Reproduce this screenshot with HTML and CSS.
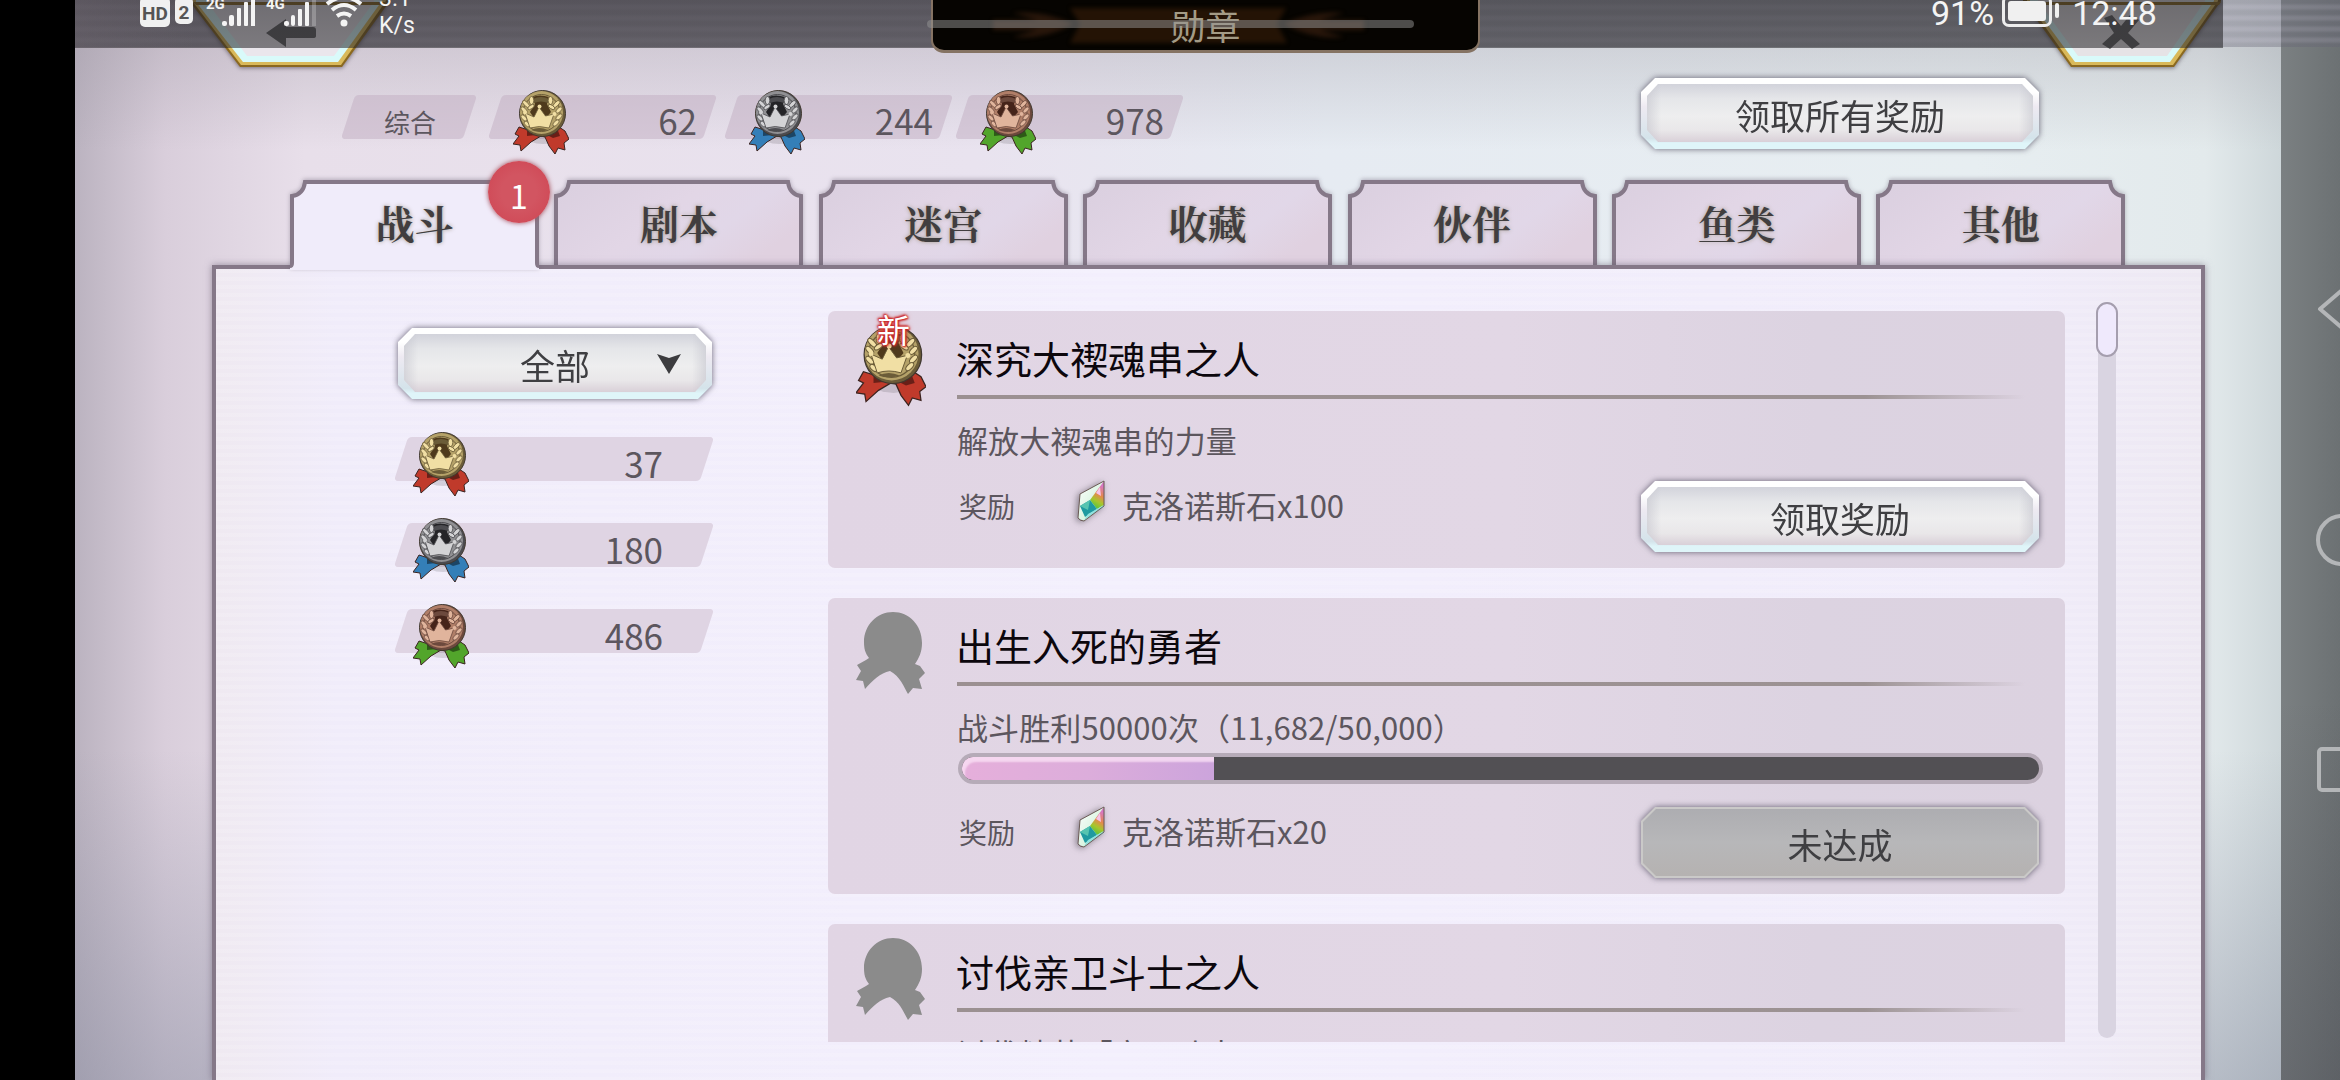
FILE: index.html
```html
<!DOCTYPE html>
<html lang="zh-CN">
<head>
    <meta charset="UTF-8">
    <meta name="viewport" content="width=device-width, initial-scale=1.0">
    <title>勋章</title>
    <link rel="stylesheet" href="styles.css">
</head>
<body>
    <svg class="defs" width="0" height="0">
        <defs>
            <linearGradient id="tabFill" x1="0" y1="0" x2="1" y2="0.5">
                <stop offset="0" stop-color="#dacfdf"/>
                <stop offset="0.5" stop-color="#e2d6e6"/>
                <stop offset="0.75" stop-color="#e1d7e8"/>
                <stop offset="1" stop-color="#e0d1e0"/>
            </linearGradient>
            <linearGradient id="btnGold" x1="0" y1="0" x2="0" y2="1">
                <stop offset="0" stop-color="#6c5016"/>
                <stop offset="0.7" stop-color="#8d6a1e"/>
                <stop offset="1" stop-color="#8a6820"/>
            </linearGradient>
            <linearGradient id="gemTop" x1="0" y1="0" x2="1" y2="1">
                <stop offset="0" stop-color="#fff"/>
                <stop offset="1" stop-color="#bfeccb"/>
            </linearGradient>
            <linearGradient id="gemSide" x1="0.3" y1="0" x2="0" y2="1">
                <stop offset="0" stop-color="#d877c4"/>
                <stop offset="0.35" stop-color="#e5884d"/>
                <stop offset="0.6" stop-color="#a8c62c"/>
                <stop offset="1" stop-color="#2ec448"/>
            </linearGradient>
        </defs>
        <symbol id="tab" viewBox="0 0 249 90">
            <path d="M2 91V16C10 15 14 10 15 2H234C235 10 239 15 247 16V91" stroke="#857888" stroke-width="4"/>
        </symbol>
        <symbol id="tabOpen" viewBox="0 0 249 90">
            <path d="M0 91V86Q2 86 2 83V16C10 15 14 10 15 2H234C235 10 239 15 247 16V83Q247 86 249 86V91Z"/>
            <path d="M0 86Q2 86 2 83V16C10 15 14 10 15 2H234C235 10 239 15 247 16V83Q247 86 249 86" fill="none" stroke="#857888" stroke-width="4"/>
        </symbol>
        <symbol id="medal" viewBox="0 0 56 65">
            <ellipse cx="30" cy="46" rx="17" ry="8" fill="#000" opacity="0.12"/>
            <path d="M6 37L2 44L6 46L0 54L7 55L8 61L18 52L28 46L32 47L36 56L42 64L45 58L52 60L51 53L56 49L52 41L46 37L28 44Z" fill="var(--ribbon)" stroke="#3b2420" stroke-width="1"/>
            <path d="M14 38L24 45L14 46ZM34 45L44 38L47 46L40 48Z" fill="#000" opacity="0.45"/>
            <circle cx="29.5" cy="23.5" r="23" fill="var(--dark)" stroke="#40382f" stroke-width="1"/>
            <circle cx="28.5" cy="22.5" r="21.5" fill="var(--mid)"/>
            <circle cx="28.5" cy="23" r="18.5" fill="none" stroke="var(--dark)" stroke-width="1"/>
            <path d="M19 7Q27 4 36 7L34 14L38 22L33 28H21L17 22L22 14Z" fill="var(--deep)"/>
            <path d="M20 9Q28 5 36 9L35 13Q28 10 21 13Z" fill="var(--dark)"/>
            <g fill="var(--light)" stroke="var(--dark)" stroke-width="0.8">
                <ellipse cx="18.500" cy="10.500" rx="2.300" ry="4"/>
                <ellipse cx="37.500" cy="10.500" rx="2.300" ry="4"/>
                <ellipse cx="13" cy="14" rx="2" ry="4.500" transform="rotate(-45 13 14)"/>
                <ellipse cx="43.500" cy="14" rx="2" ry="4.500" transform="rotate(45 43.500 14)"/>
                <ellipse cx="18" cy="17" rx="1.800" ry="3.800" transform="rotate(55 18 17)"/>
                <ellipse cx="38.500" cy="17" rx="1.800" ry="3.800" transform="rotate(-55 38.500 17)"/>
                <ellipse cx="11" cy="20" rx="2" ry="4" transform="rotate(-45 11 20)"/>
                <ellipse cx="46" cy="20" rx="2" ry="4" transform="rotate(45 46 20)"/>
                <ellipse cx="11" cy="28" rx="2" ry="4" transform="rotate(-45 11 28)"/>
                <ellipse cx="46" cy="27" rx="2" ry="4" transform="rotate(45 46 27)"/>
                <ellipse cx="43" cy="33" rx="2" ry="4" transform="rotate(45 43 33)"/>
                <ellipse cx="14" cy="34" rx="2" ry="3.500" transform="rotate(-45 14 34)"/>
            </g>
            <path d="M12 23L21 27L26 17L32.500 26L41 24L36 38Q26 35 17 38Z" fill="var(--light)" stroke="var(--dark)" stroke-width="0.800"/>
            <circle cx="26.500" cy="16.500" r="2" fill="var(--light)"/>
            <circle cx="12" cy="22.500" r="2" fill="var(--light)"/>
            <circle cx="41.500" cy="24" r="2" fill="var(--light)"/>
            <path d="M18 40Q26 36 35 40Q26 43 18 40Z" fill="var(--dark)"/>
        </symbol>
        <symbol id="silhouette" viewBox="0 0 70 82">
            <path d="M37 0C53 0 66 13 66 31C66 40 63 46 59 52L64 54L69 61L63 67L66 77L57 76L52 82C48 75 44 64 34 59C24 61 17 68 9 77L7 69L0 68L5 59L1 53L10 48L13 46C9 41 8 36 8 30C8 13 21 0 37 0Z" fill="#8b8b8b"/>
        </symbol>
        <symbol id="gem" viewBox="0 0 30 42">
            <path d="M28 1L4 14L2 38L8 41L28 26Z" fill="url(#gemTop)"/>
            <path d="M28 1L14 20L21 29L28 25Z" fill="url(#gemSide)"/>
            <path d="M24 7L20 13L25 16Z" fill="#f5c3e8"/>
            <path d="M4 26L14 20L21 29L9 37Z" fill="#1f9aa0"/>
            <path d="M4 26L14 20L12 30Z" fill="#56c4b0"/>
            <path d="M8 40L12 34L28 25V27Z" fill="#8fe2df"/>
            <path d="M28 1L4 14L2 38Q4 41 8 41L28 26Z" fill="none" stroke="#6b5a55" stroke-width="1"/>
        </symbol>
    </svg>

    <div class="screen">
        <div class="cutout"></div>
        <div class="game">
            <div class="summary">
                <div class="chip chip_label"><span>综合</span></div>
                <div class="chip gold"><svg class="medal"><use href="#medal"/></svg><span>62</span></div>
                <div class="chip silver"><svg class="medal"><use href="#medal"/></svg><span>244</span></div>
                <div class="chip bronze"><svg class="medal"><use href="#medal"/></svg><span>978</span></div>
                <div class="button claim_all"><span>领取所有奖励</span></div>
            </div>

            <div class="tabs">
                <div class="tab active"><svg><use href="#tabOpen"/></svg><span>战斗</span><div class="badge">1</div></div>
                <div class="tab"><svg><use href="#tab"/></svg><span>剧本</span></div>
                <div class="tab"><svg><use href="#tab"/></svg><span>迷宫</span></div>
                <div class="tab"><svg><use href="#tab"/></svg><span>收藏</span></div>
                <div class="tab"><svg><use href="#tab"/></svg><span>伙伴</span></div>
                <div class="tab"><svg><use href="#tab"/></svg><span>鱼类</span></div>
                <div class="tab"><svg><use href="#tab"/></svg><span>其他</span></div>
            </div>

            <div class="panel">
                <div class="side">
                    <div class="button filter">
                        <span>全部</span>
                        <svg class="arrow" viewBox="0 0 24 20"><path d="M0 0L12 4L24 0L12 20Z" fill="#3c3c3f"/></svg>
                    </div>
                    <div class="count gold"><svg class="medal"><use href="#medal"/></svg><span>37</span></div>
                    <div class="count silver"><svg class="medal"><use href="#medal"/></svg><span>180</span></div>
                    <div class="count bronze"><svg class="medal"><use href="#medal"/></svg><span>486</span></div>
                </div>

                <div class="list">
                    <div class="card card_new">
                        <div class="emblem gold"><svg><use href="#medal"/></svg><div class="new">新</div></div>
                        <div class="info">
                            <div class="title">深究大禊魂串之人</div>
                            <div class="rule"></div>
                            <div class="desc">解放大禊魂串的力量</div>
                            <div class="reward">
                                <span class="reward_label">奖励</span>
                                <svg class="gem"><use href="#gem"/></svg>
                                <span class="reward_item">克洛诺斯石x100</span>
                                <div class="button"><span>领取奖励</span></div>
                            </div>
                        </div>
                    </div>
                    <div class="card card_progress">
                        <div class="emblem"><svg><use href="#silhouette"/></svg></div>
                        <div class="info">
                            <div class="title">出生入死的勇者</div>
                            <div class="rule"></div>
                            <div class="desc">战斗胜利50000次（11,682/50,000）</div>
                            <div class="progress"><div class="bar" style="width: 23.36%"></div></div>
                            <div class="reward">
                                <span class="reward_label">奖励</span>
                                <svg class="gem"><use href="#gem"/></svg>
                                <span class="reward_item">克洛诺斯石x20</span>
                                <div class="button disabled"><span>未达成</span></div>
                            </div>
                        </div>
                    </div>
                    <div class="card card_progress">
                        <div class="emblem"><svg><use href="#silhouette"/></svg></div>
                        <div class="info">
                            <div class="title">讨伐亲卫斗士之人</div>
                            <div class="rule"></div>
                            <div class="desc">讨伐精英「亲卫斗士」</div>
                        </div>
                    </div>
                </div>

                <div class="scroll"><div class="thumb"></div></div>
            </div>
        </div>

        <div class="nav">
            <svg viewBox="0 0 59 1080" fill="none" stroke="#b4b6b8" stroke-width="4" stroke-linejoin="round">
                <path d="M66 286L39 309L66 332Z"/>
                <circle cx="61" cy="540" r="24"/>
                <rect x="38" y="749" width="44" height="41" rx="3"/>
            </svg>
        </div>
    </div>

    <!-- top overlays -->
    <div class="topband"></div>
    <svg class="corner corner_back" viewBox="0 0 206 70">
        <path d="M3 -10L3 2L53 67H155L205 -2V-10Z" fill="url(#btnGold)"/>
        <path d="M6 -10V2L54 65H154L201 -2V-10Z" fill="#d9b95a"/>
        <path d="M9 -10V2L56 62H151L197 -2V-10Z" fill="#d9fafa"/>
        <path d="M20 -10V2L60 56H147L187 2V-10Z" fill="#eae6ec"/>
        <path d="M3 -10V-2H205V-10ZM6 2H203L201 5H9Z" fill="#8d6a1e"/>
        <path d="M79 33L99 19V27H126Q129 27 129 30V36Q129 38 126 38H99V47Z" fill="#606062"/>
    </svg>
    <svg class="corner corner_close" viewBox="0 0 206 70">
        <path d="M5 -10V1L53 67H156L203 1V-10Z" fill="url(#btnGold)"/>
        <path d="M9 -10V1L54 65H155L200 1V-10Z" fill="#d9b95a"/>
        <path d="M12 -10V1L57 62H152L196 1V-10Z" fill="#d9fafa"/>
        <path d="M20 -10V1L60 56H149L187 1V-10Z" fill="#e6e3e6"/>
        <path d="M5 2H203L201 5H8Z" fill="#8d6a1e"/>
        <path d="M86 18L94 15L103 26L112 15L121 20L110 33L122 44L114 49L103 39L92 49L84 44L96 33Z" fill="#606062"/>
    </svg>
    <div class="statusbar">
        <span class="hd">HD</span>
        <span class="sim">2</span>
        <svg class="signals" viewBox="200 0 165 30" fill="#f4f4f4">
            <g font-family="Roboto, sans-serif" font-size="15" font-weight="700"><text x="206" y="9">2G</text><text x="266" y="9">4G</text></g>
            <rect x="222" y="21" width="5" height="5" rx="2"/><rect x="229" y="15" width="5" height="11" rx="2"/><rect x="237" y="8" width="4" height="18" rx="1"/><rect x="244" y="2" width="4" height="24" rx="1"/><rect x="251" y="-5" width="4" height="31"/>
            <rect x="284" y="21" width="5" height="5" rx="2"/><rect x="291" y="15" width="4" height="11" rx="2"/><rect x="298" y="9" width="4" height="17" rx="1"/><rect x="305" y="2" width="4" height="24" rx="1"/><rect x="312" y="-5" width="4" height="31" opacity="0.25"/>
            <circle cx="344" cy="23" r="3.500"/>
            <g fill="none" stroke="#f4f4f4" stroke-width="4"><path d="M337 16Q344 11 351 16"/><path d="M332 10Q344 0 356 10"/><path d="M327 4Q344 -10 361 4"/></g>
        </svg>
        <div class="speed"><div>3.1</div><div>K/s</div></div>
        <span class="percent">91%</span>
        <div class="battery"><div></div></div>
        <span class="clock">12:48</span>
    </div>
    <div class="heading">
        <svg viewBox="0 0 547 51">
            <path d="M137 8H353L344 24L354 43H137L147 24Z" fill="#241305"/>
            <path d="M80 13Q112 10 140 24Q112 40 80 37L104 30H60L60 20H104Z" fill="#28160a"/>
            <path d="M411 13Q379 10 351 24Q379 40 411 37L387 30H431V20H387Z" fill="#28160a"/>
        </svg>
        <span>勋章</span>
    </div>
    <div class="handle"></div>
</body>
</html>
```

FILE: styles.css
```css
body
{
    margin: 0;
    width: 2340px;
    height: 1080px;
    position: relative;
    overflow: hidden;
    background-color: #000;
    font-family: "Noto Sans CJK SC", "Noto Sans", sans-serif;
    color: #5c565e;
}
svg
{
    display: block;
}
.defs
{
    position: absolute;
}
.screen
{
    display: flex;
    height: 1080px;
}
.cutout
{
    width: 75px;
    background-color: #000;
}
.game
{
    width: 2206px;
    display: flex;
    flex-direction: column;
    background:
        linear-gradient(to bottom, rgba(150, 145, 155, 0.3) 40px, transparent 150px),
        linear-gradient(to bottom, transparent 750px, rgba(130, 135, 155, 0.45) 1080px),
        linear-gradient(to right, #bbb3c0 0, #d9cedb 90px, #e8dfea 230px, #e9e3ef 900px, #e6ebf2 1250px, #e7eef1 1900px, #e3eaec 2130px, #ced7da 2206px);
}

/* medals */
.gold
{
    --light: #f1dfa4;
    --mid: #b5a269;
    --dark: #6b5c38;
    --deep: #4f3a1c;
    --ribbon: #c03a2b;
}
.silver
{
    --light: #d3d3d5;
    --mid: #909093;
    --dark: #4c4c50;
    --deep: #242427;
    --ribbon: #347fb8;
}
.bronze
{
    --light: #e0b49c;
    --mid: #b07e68;
    --dark: #6c493d;
    --deep: #45241a;
    --ribbon: #52a52b;
}
.medal
{
    width: 56px;
    height: 65px;
}

/* bevelled buttons */
.button
{
    width: 398px;
    height: 71px;
    position: relative;
    filter: drop-shadow(0 0 3px rgba(70, 65, 85, 0.8));
    flex-shrink: 0;
    font-size: 35px;
    line-height: 73px;
    text-align: center;
    color: #3f3f42;
}
.button::before,
.button::after
{
    content: "";
    position: absolute;
    inset: 0;
    background: linear-gradient(to bottom, #fff 0, #fff 20%, #eeeaf2 40%, #d4e3ea 85%, #dff5f9 92%);
    clip-path: polygon(14px 0, calc(100% - 14px) 0, 100% 14px, 100% calc(100% - 14px), calc(100% - 14px) 100%, 14px 100%, 0 calc(100% - 14px), 0 14px);
}
.button::after
{
    inset: 6px 6px 7px;
    background:
        linear-gradient(to right, rgba(190, 190, 200, 0.5), transparent 14px, transparent calc(100% - 14px), rgba(190, 190, 200, 0.5)),
        linear-gradient(to bottom, #d2d3db 0, #e5e6e9 25%, #eeeeef 55%, #e9e7e9 80%, #d9d0d8 100%);
    clip-path: polygon(11px 0, calc(100% - 11px) 0, 100% 12px, 100% calc(100% - 12px), calc(100% - 11px) 100%, 11px 100%, 0 calc(100% - 12px), 0 12px);
}
.button span
{
    position: relative;
    z-index: 1;
}
.button.disabled::before
{
    background: #cac9c8;
}
.button.disabled::after
{
    inset: 2px;
    background: linear-gradient(to bottom, #adadb1 0, #b7b7b9 50%, #b5b2b1 100%);
    clip-path: polygon(13px 0, calc(100% - 13px) 0, 100% 13px, 100% calc(100% - 13px), calc(100% - 13px) 100%, 13px 100%, 0 calc(100% - 13px), 0 13px);
}

/* totals */
.summary
{
    height: 71px;
    margin-top: 78px;
    padding-left: 266px;
    display: flex;
}
.chip
{
    width: 229px;
    height: 44px;
    margin-top: 17px;
    margin-right: 7px;
    box-sizing: border-box;
    display: flex;
    justify-content: space-between;
    position: relative;
    font-size: 35px;
    line-height: 49px;
    padding: 0 20px 0 25px;
}
.chip::before,
.count::before
{
    content: "";
    position: absolute;
    inset: 0 7px;
    border-radius: 4px;
    background-color: rgba(193, 174, 193, 0.5);
    transform: skewX(-18deg);
}
.chip span,
.chip svg,
.count span,
.count svg
{
    position: relative;
}
.chip svg
{
    margin-top: -5px;
}
.chip_label
{
    width: 136px;
    font-size: 26px;
    line-height: 53px;
    justify-content: center;
    margin-right: 11px;
    padding: 0 0 0 2px;
}
.chip.silver
{
    margin-right: 2px;
}
.chip.bronze
{
    margin-right: 0;
}
.claim_all
{
    margin-left: 457px;
}

/* tabs */
.tabs
{
    height: 85px;
    margin-top: 31px;
    padding-left: 215px;
    display: flex;
    gap: 15.4px;
}
.tab
{
    width: 249px;
    height: 85px;
    position: relative;
    font-family: "Noto Serif CJK SC", "Source Han Serif SC", "Noto Sans CJK SC", serif;
    font-size: 39px;
    font-weight: 700;
    line-height: 84px;
    text-align: center;
    color: #413e3f;
    text-shadow: 0 0 4px #a59d90;
}
.tab svg
{
    position: absolute;
    left: 0;
    top: 0;
    width: 249px;
    height: 90px;
    fill: url(#tabFill);
    filter: drop-shadow(0 -1px 2px rgba(100, 90, 110, 0.4));
}
.tab span
{
    position: relative;
}
.tab.active
{
    z-index: 2;
}
.tab.active svg
{
    fill: #f0ecfa;
}
.badge
{
    width: 62px;
    height: 62px;
    border-radius: 50%;
    background: radial-gradient(circle, #d25561 40%, #d04b58 75%, #b04450 100%);
    box-shadow: 0 0 5px #a04c58;
    position: absolute;
    left: 198px;
    top: -19px;
    font-family: "Noto Sans CJK SC", sans-serif;
    font-size: 32px;
    font-weight: 400;
    line-height: 68px;
    color: #fff;
    text-shadow: none;
}

/* panel */
.panel
{
    width: 1985px;
    margin-left: 137px;
    border: 4px solid #857888;
    border-bottom: none;
    flex: 1;
    display: flex;
    position: relative;
    z-index: 1;
    background:
        repeating-linear-gradient(to bottom, rgba(255, 255, 255, 0.12) 0, rgba(255, 255, 255, 0.12) 4px, transparent 4px, transparent 8px),
        linear-gradient(to right, #efe9f1 0, #f0ecfa 120px, #f3effd 900px, #f0ecfa 1800px, #ede8f2 1985px);
    box-shadow: 0 0 7px rgba(100, 90, 110, 0.6);
}
.side
{
    width: 314px;
    padding: 59px 0 0 182px;
}
.filter
{
    width: 314px;
}
.arrow
{
    width: 24px;
    height: 20px;
    position: absolute;
    right: 31px;
    top: 26px;
    z-index: 1;
}
.count
{
    width: 320px;
    height: 44px;
    margin: 0 0 42px -4px;
    padding: 0 51px 0 19px;
    box-sizing: border-box;
    position: relative;
    display: flex;
    justify-content: space-between;
    font-size: 35px;
    line-height: 51px;
}
.count::before
{
    background-color: #dfd4e3;
}
.count svg
{
    margin-top: -5px;
}
.filter + .count
{
    margin-top: 38px;
}
.list
{
    width: 1237px;
    height: 731px;
    margin: 42px 0 0 116px;
    overflow: hidden;
}
.card
{
    height: 257px;
    margin-bottom: 30px;
    display: flex;
    border-radius: 7px;
    background: linear-gradient(to right, #e1d5e4 0, #e2d7e5 55%, #dcd3e1 80%, #dcd2e0 100%);
}
.card_progress
{
    height: 296px;
}
.emblem
{
    width: 129px;
    position: relative;
}
.emblem svg
{
    width: 70px;
    height: 82px;
    margin: 14px 0 0 28px;
}
.new
{
    position: absolute;
    left: 49px;
    top: -6px;
    font-size: 33px;
    line-height: 48px;
    color: #fff;
    text-shadow: 0 0 2px #c22, 0 0 3px #c22, 0 0 5px #c44, 1px 1px 2px #c22, -1px -1px 2px #c22;
}
.info
{
    width: 1086px;
}
.title
{
    height: 74px;
    padding-top: 10px;
    margin-left: -1px;
    font-size: 38px;
    line-height: 74px;
    color: #0c070d;
}
.rule
{
    width: 1068px;
    height: 4px;
    background: linear-gradient(to right, #9b9091 0, #9c9293 85%, transparent 100%);
}
.desc
{
    height: 81px;
    font-size: 31px;
    line-height: 81px;
    letter-spacing: 0.1px;
}
.progress
{
    height: 23px;
    margin-top: -14px;
    margin-left: 1px;
    border: 4px solid #b6abb8;
    border-radius: 16px;
    overflow: hidden;
    background-color: #525054;
}
.bar
{
    height: 23px;
    border-radius: 11px 0 0 11px;
    box-shadow: inset 3px 5px 2px rgba(250, 225, 245, 0.8);
    background: linear-gradient(to right, #e6afdb, #dcaddb 50%, #cca4dc);
}
.reward
{
    display: flex;
    font-size: 31px;
    line-height: 50px;
}
.card_progress .reward
{
    margin-top: 22px;
}
.reward_label
{
    width: 117px;
    padding-left: 2px;
    font-size: 28px;
    line-height: 53px;
}
.gem
{
    width: 30px;
    height: 42px;
    margin-right: 16px;
    filter: drop-shadow(-2px 1px 3px rgba(80, 75, 85, 0.6));
}
.reward .button
{
    margin-left: auto;
    margin-right: 4px;
    margin-top: 1px;
}
.scroll
{
    width: 18px;
    height: 736px;
    margin: 33px 0 0 33px;
    border-radius: 9px;
    background-color: #d9d4e1;
}
.thumb
{
    width: 18px;
    height: 51px;
    margin: 0 0 0 -2px;
    border: 2px solid #a59eae;
    border-radius: 11px;
    background-color: #efe9fc;
}

/* phone navigation strip */
.nav
{
    width: 59px;
    background:
        linear-gradient(to bottom, transparent 700px, rgba(60, 60, 70, 0.3)),
        linear-gradient(to right, #7b8082, #6c7173);
}

/* things lying over the top edge */
.topband
{
    width: 2265px;
    height: 47px;
    position: absolute;
    left: 75px;
    top: 0;
    background: repeating-linear-gradient(to bottom, rgba(100, 98, 115, 0.35) 0, rgba(100, 98, 115, 0.35) 3px, rgba(140, 136, 155, 0.4) 6px, rgba(140, 136, 155, 0.4) 8px, rgba(100, 98, 115, 0.35) 11px);
}
.corner
{
    width: 206px;
    height: 70px;
    position: absolute;
    top: 0;
    filter: drop-shadow(0 1px 2px rgba(60, 50, 60, 0.6));
}
.corner_back
{
    left: 187px;
}
.corner_close
{
    left: 2018px;
}
.statusbar
{
    width: 2148px;
    height: 48px;
    position: absolute;
    left: 75px;
    top: 0;
    background:
        linear-gradient(to right, rgba(120, 110, 120, 0.35), transparent 120px),
        linear-gradient(to bottom, rgba(35, 34, 38, 0.62), rgba(35, 34, 37, 0.55));
    display: flex;
    align-items: flex-start;
    color: #f4f4f4;
    font-family: Roboto, sans-serif;
}
.hd,
.sim
{
    width: 30px;
    height: 30px;
    margin: -3px 0 0 65px;
    border-radius: 5px;
    background-color: #f0f0f0;
    color: #555;
    font-size: 19px;
    font-weight: 700;
    line-height: 33px;
    text-align: center;
}
.sim
{
    width: 18px;
    height: 27px;
    margin-left: 5px;
    line-height: 31px;
}
.signals
{
    width: 165px;
    height: 30px;
    margin-left: 7px;
}
.speed
{
    width: 40px;
    margin: -15px 0 0 14px;
    font-size: 23px;
    line-height: 27px;
}
.percent,
.clock
{
    font-size: 34px;
    line-height: 40px;
    margin-top: -7px;
}
.percent
{
    margin-left: 1512px;
}
.battery
{
    width: 38px;
    height: 20px;
    margin: -5px 0 0 8px;
    padding: 3px;
    border: 3px solid #ededed;
    border-radius: 7px;
    position: relative;
}
.battery div
{
    height: 20px;
    border-radius: 3px;
    background-color: #f0f0f0;
}
.battery::after
{
    content: "";
    width: 4px;
    height: 15px;
    border-radius: 2px;
    background-color: #f0f0f0;
    position: absolute;
    right: -10px;
    top: 5px;
}
.clock
{
    margin-left: 20px;
}
.heading
{
    width: 545px;
    height: 50px;
    position: absolute;
    left: 931px;
    top: 0;
    border: solid #857363;
    border-width: 0 2px 3px;
    border-radius: 0 0 13px 13px;
    background-color: #060401;
    font-size: 35px;
    line-height: 50px;
    text-align: center;
    color: #a39b86;
    overflow: hidden;
}
.heading svg
{
    width: 547px;
    height: 51px;
    position: absolute;
    left: 0;
    top: 0;
    filter: blur(2px);
}
.heading span
{
    position: relative;
}
.handle
{
    width: 487px;
    height: 8px;
    border-radius: 4px;
    position: absolute;
    left: 927px;
    top: 20px;
    background-color: rgba(150, 150, 150, 0.5);
}
```
